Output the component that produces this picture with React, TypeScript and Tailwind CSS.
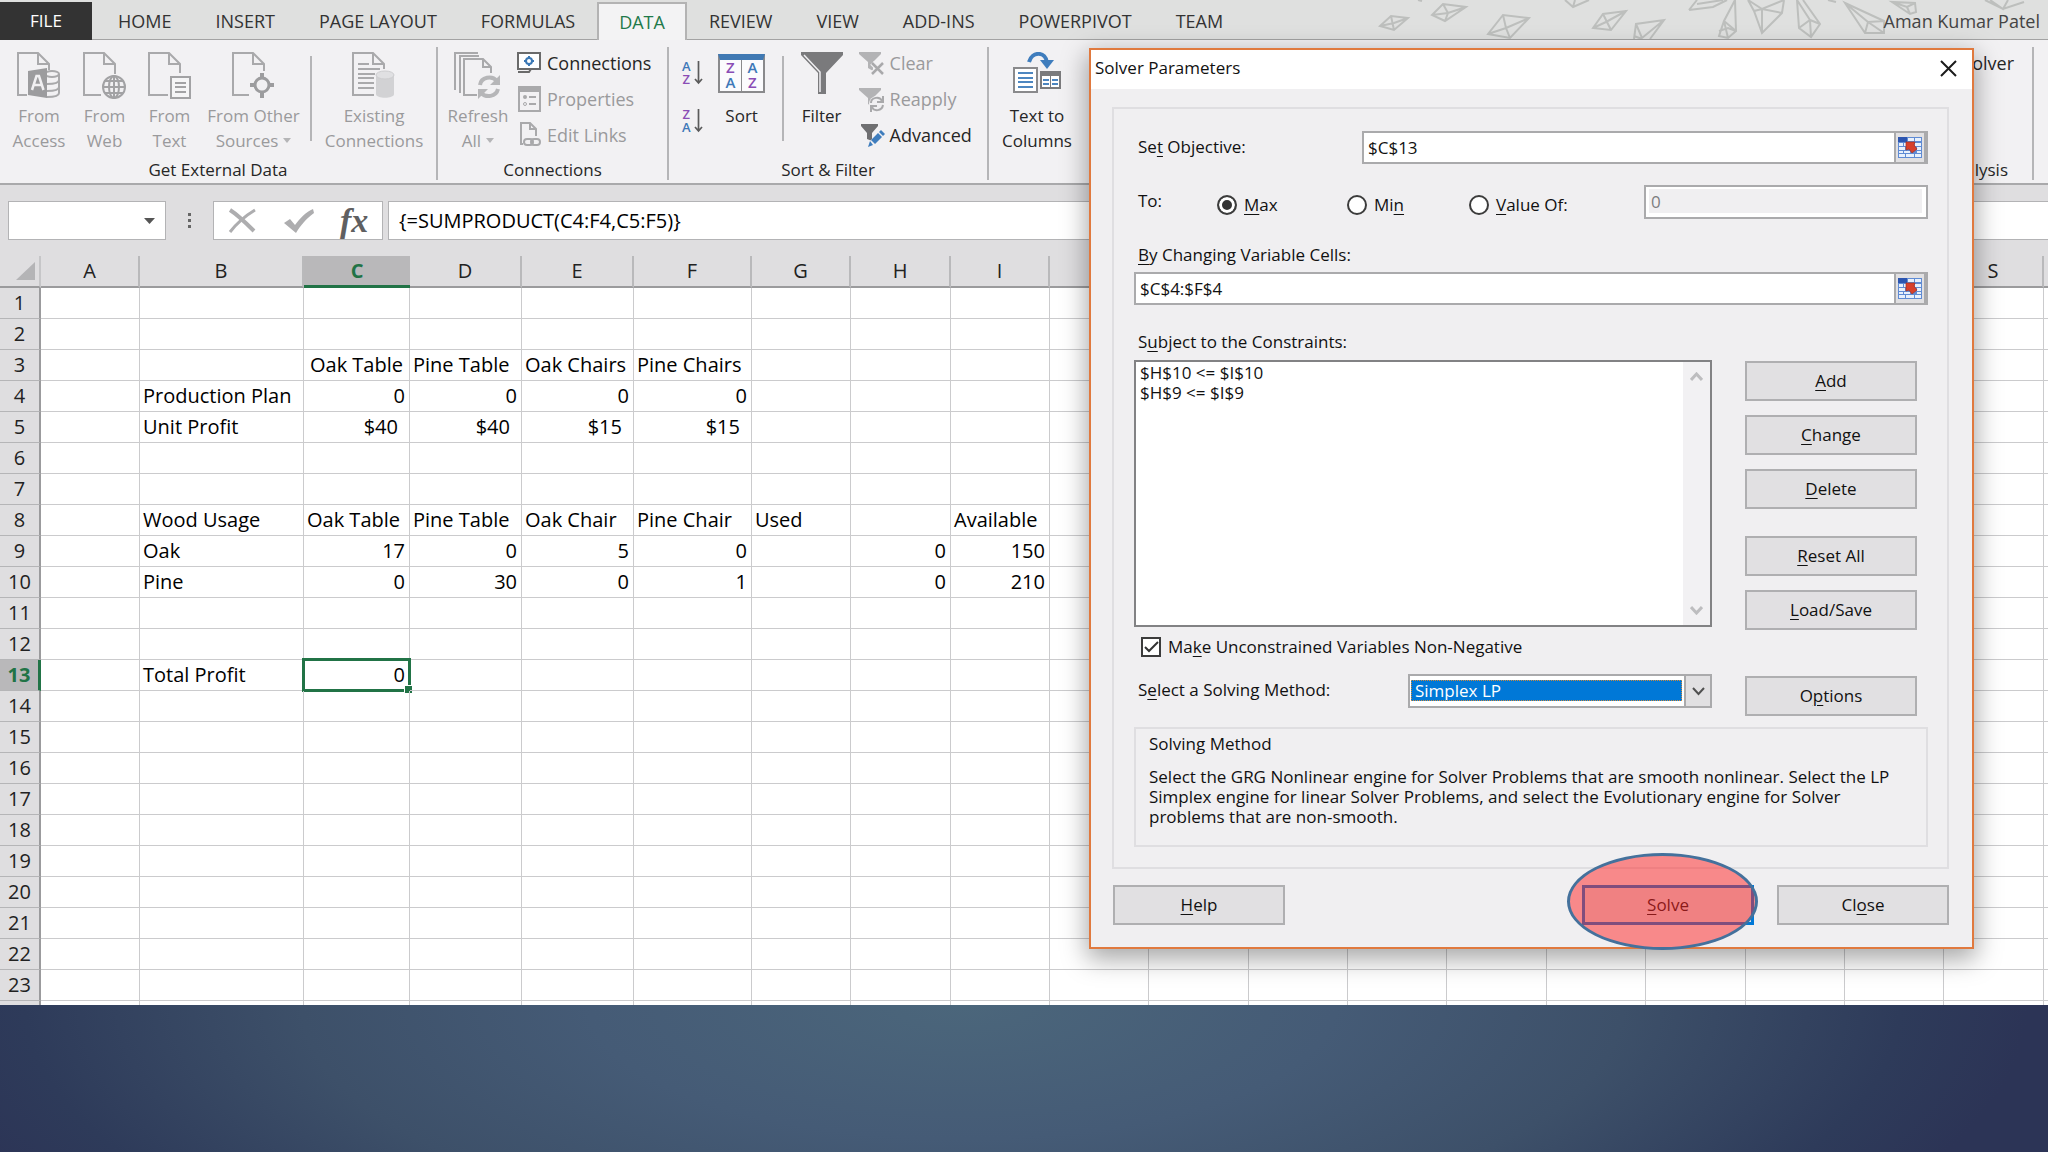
import React from "react";

const GREY = "#a9a9ab";

/* ---------- icons ---------- */

function AccessIcon() {
  return (
    <svg width="44" height="48" viewBox="0 0 44 48" aria-hidden="true">
      <path d="M10 43H1V1h20l11 11v6M21 1v11h11" fill="none" stroke={GREY} strokeWidth="2" />
      <g fill="none" stroke={GREY} strokeWidth="2">
        <ellipse cx="35" cy="22" rx="7" ry="3" />
        <path d="M42 22v19c0 2-3 4-12 4M42 28c0 3-5 4-12 4M42 35c0 3-5 4-12 4" />
      </g>
      <path d="M11 19l19-3v30l-19-3z" fill="#9c9c9e" />
      <path d="M15 38l4.500-14h2.500l4.500 14M17 33h7" fill="none" stroke="#f1f0f2" strokeWidth="2.500" />
    </svg>
  );
}

function WebIcon() {
  return (
    <svg width="44" height="48" viewBox="0 0 44 48" aria-hidden="true">
      <path d="M18 43H1V1h20l11 11v10M21 1v11h11" fill="none" stroke={GREY} strokeWidth="2" />
      <circle cx="31" cy="35" r="11" fill="#f1f0f2" stroke="#a2a2a4" strokeWidth="2" />
      <g fill="none" stroke="#a2a2a4" strokeWidth="2">
        <ellipse cx="31" cy="35" rx="5" ry="11" />
        <path d="M31 24v22M20 35h22M22 29h18M22 41h18" />
      </g>
    </svg>
  );
}

function TextIcon() {
  return (
    <svg width="44" height="48" viewBox="0 0 44 48" aria-hidden="true">
      <path d="M20 43H1V1h20l11 11v9M21 1v11h11" fill="none" stroke={GREY} strokeWidth="2" />
      <rect x="23" y="25" width="19" height="21" fill="#f5f5f6" stroke="#a2a2a4" strokeWidth="2" />
      <path d="M27 31h11M27 35h11M27 40h11" stroke="#a2a2a4" strokeWidth="2" />
    </svg>
  );
}

function SourcesIcon() {
  return (
    <svg width="44" height="48" viewBox="0 0 44 48" aria-hidden="true">
      <path d="M17 43H1V1h20l11 11v7M21 1v11h11" fill="none" stroke={GREY} strokeWidth="2" />
      <circle cx="30" cy="33" r="7" fill="#f1f0f2" stroke="#9c9c9e" strokeWidth="3" />
      <path d="M30 21v5M30 40v6M18 33h5M37 33h5" stroke="#9c9c9e" strokeWidth="4" />
    </svg>
  );
}

function ExistingIcon() {
  return (
    <svg width="44" height="48" viewBox="0 0 44 48" aria-hidden="true">
      <path d="M22 43H1V1h20l11 11v5M21 1v11h11" fill="none" stroke={GREY} strokeWidth="2" />
      <path d="M6 12h11M6 17h22M6 22h17M6 26h16M6 31h16M6 36h16" stroke={GREY} strokeWidth="2" />
      <path d="M24 23v19c0 5 18 5 18 0V23z" fill="#d2d2d4" />
      <ellipse cx="33" cy="23" rx="9" ry="4" fill="#e0e0e2" stroke="#cdcdcf" />
    </svg>
  );
}

function RefreshIcon() {
  return (
    <svg width="48" height="48" viewBox="0 0 48 48" aria-hidden="true">
      <path d="M1 38V1h23M6 41V4h19" fill="none" stroke={GREY} strokeWidth="2" />
      <path d="M23 43H10V7h19l8 8v6M29 7v8h8" fill="none" stroke={GREY} strokeWidth="2" />
      <g fill="none" stroke="#b6b6b8" strokeWidth="4">
        <path d="M26 33c1-8 12-10 17-4" />
        <path d="M44 37c-2 8-12 9-17 4" />
      </g>
      <path d="M46 23v10H36zM24 47V37h10z" fill="#b6b6b8" />
    </svg>
  );
}

function ConnectionsIcon() {
  return (
    <svg width="24" height="22" viewBox="0 0 24 22" aria-hidden="true">
      <rect x="1" y="1" width="22" height="16" fill="#fff" stroke="#6a6a6a" strokeWidth="2" />
      <path d="M1 20h11l2-3h5" fill="none" stroke="#6a6a6a" strokeWidth="2" />
      <circle cx="12" cy="9" r="3" fill="none" stroke="#3b78b5" strokeWidth="2" />
      <path d="M12 4v3M12 11v3M7 9h3M14 9h3" stroke="#3b78b5" strokeWidth="2" />
    </svg>
  );
}

function PropertiesIcon() {
  return (
    <svg width="24" height="26" viewBox="0 0 24 26" aria-hidden="true">
      <path d="M2 1h21v24H2z" fill="none" stroke={GREY} strokeWidth="2" />
      <path d="M1 0h23v6H1z" fill={GREY} />
      <circle cx="8" cy="11" r="2" fill={GREY} />
      <circle cx="8" cy="18" r="1.500" fill="none" stroke={GREY} />
      <path d="M12 11h7M12 18h7" stroke={GREY} strokeWidth="2" />
    </svg>
  );
}

function LinksIcon() {
  return (
    <svg width="24" height="26" viewBox="0 0 24 26" aria-hidden="true">
      <path d="M6 22H4V1h9l6 6v7M13 1v6h6" fill="none" stroke={GREY} strokeWidth="2" />
      <g fill="none" stroke={GREY} strokeWidth="2">
        <rect x="7" y="17" width="9" height="6" rx="3" />
        <rect x="14" y="17" width="9" height="6" rx="3" />
      </g>
    </svg>
  );
}

function LetterSort({ top, bottom }: { top: "A" | "Z"; bottom: "A" | "Z" }) {
  return (
    <button type="button" aria-label={`Sort ${top} to ${bottom}`} className="flex h-[26px] items-center gap-[3px]">
      <span className="flex flex-col text-[13px] font-semibold leading-[13px]" aria-hidden="true">
        <span className={top === "A" ? "text-[#3e78b8]" : "text-[#8a4db5]"}>{top}</span>
        <span className={bottom === "A" ? "text-[#3e78b8]" : "text-[#8a4db5]"}>{bottom}</span>
      </span>
      <svg width="9" height="24" viewBox="0 0 9 24" aria-hidden="true">
        <path d="M4.500 0v22M1 18l3.500 4 3.500-4" fill="none" stroke="#5b5b5b" strokeWidth="1.700" />
      </svg>
    </button>
  );
}

function SortIcon() {
  return (
    <span
      className="mt-[2px] grid h-[39px] w-[47px] grid-cols-2 border-2 border-t-[6px] border-[#8a8a8c] border-t-[#4079b3] bg-[#fbfbfd] text-center text-[15px] font-semibold leading-[15px]"
      aria-hidden="true"
    >
      <span className="flex flex-col border-r border-[#8a8a8c]">
        <span className="text-[#8a4db5]">Z</span>
        <span className="text-[#3e78b8]">A</span>
      </span>
      <span className="flex flex-col">
        <span className="text-[#3e78b8]">A</span>
        <span className="text-[#8a4db5]">Z</span>
      </span>
    </span>
  );
}

function FilterIcon() {
  return (
    <svg width="42" height="43" viewBox="0 0 42 43" aria-hidden="true">
      <path d="M0 0h42v3L25 21v21h-8V21L0 3z" fill="#7a7a7c" />
      <path d="M3 3l16 17v20" fill="none" stroke="#f1f0f2" strokeWidth="1.500" />
    </svg>
  );
}

function SmallFunnel({ kind }: { kind: "clear" | "reapply" | "advanced" }) {
  const dark = kind === "advanced";
  return (
    <svg width="26" height="25" viewBox="0 0 26 25" aria-hidden="true">
      <path d={dark ? "M2 1h17v2l-6 7v8l-5-2v-6L2 3z" : "M0 1h22v2l-8 8v9l-5-3v-6L0 3z"} fill={dark ? "#6f6f71" : "#b3b3b5"} />
      {kind === "clear" && <path d="M13 12l11 11M24 12L13 23" stroke="#f1f0f2" strokeWidth="5" />}
      {kind === "clear" && <path d="M13 12l11 11M24 12L13 23" stroke="#a9a9ab" strokeWidth="2.500" />}
      {kind === "reapply" && (
        <g fill="none" stroke="#a9a9ab" strokeWidth="2">
          <circle cx="18" cy="17" r="8" fill="#f1f0f2" stroke="none" />
          <path d="M12 16c0-6 9-7 11-2M24 9v6h-6M24 18c-1 6-9 7-11 2M12 25v-6h6" />
        </g>
      )}
      {dark && (
        <g>
          <path d="M9 25l2-7L22 7l4 4-11 11z" fill="#f1f0f2" />
          <path d="M9 24l2-6 3 4zM12 17l7-7 4 4-7 7zM20 9l2-2 4 4-2 2z" fill="#3f7dbd" />
        </g>
      )}
    </svg>
  );
}

function ColumnsIcon() {
  return (
    <svg width="48" height="41" viewBox="0 0 48 41" aria-hidden="true">
      <path d="M16 10C19-1 33-1 34 11" fill="none" stroke="#3f7dbd" strokeWidth="4" />
      <path d="M27 8l7 9 7-9z" fill="#3f7dbd" />
      <rect x="1" y="16" width="23" height="24" fill="#fff" stroke="#8a8a8c" strokeWidth="2" />
      <path d="M5 21h15M5 26h15M5 30h15M5 35h15" stroke="#4d86c0" strokeWidth="2" />
      <rect x="28" y="20" width="19" height="16" fill="#fff" stroke="#7b7b7d" strokeWidth="2" />
      <path d="M27 19h21v5H27z" fill="#7b7b7d" />
      <path d="M30 28h6M39 28h6M30 32h6M39 32h6" stroke="#4d86c0" strokeWidth="2" />
      <path d="M37.500 24v12" stroke="#7b7b7d" />
    </svg>
  );
}

function Backdrop() {
  return (
    <svg
      className="absolute right-0 top-0"
      width="678"
      height="40"
      viewBox="1370 0 678 40"
      fill="none"
      stroke="#bdbfbd"
      strokeWidth="2"
      aria-hidden="true"
    >
      <path d="M1380 26l11-10 17 2-14 12zM1380 26l14-3 14-5M1391 16l3 14" />
      <path d="M1432 15l11-11 23 3-21 14zM1432 15l16-2 18-6M1443 4l5 9-3 8M1418 0l4 1" />
      <path d="M1488 34l15-19 26 3-19 20zM1488 34l18-6 23-10M1503 15l3 13 4 10" />
      <path d="M1565 0l8 7 16-7M1573 7l2-7" />
      <path d="M1593 28l10-14 23-3-15 19zM1593 28l13-6 20-11M1603 14l8 16" />
      <path d="M1634 39l2-15 28-4-14 19M1636 24l6 14 22-18M1634 36l8 3" />
      <path d="M1689 10l8-10M1689 10l24-3 14-7M1697 4l26-4" />
      <path d="M1719 36l5-15 11-21 1 31-8 7zM1724 21l4 17M1724 21l12 10M1719 31l9-3 8 3" />
      <path d="M1748 0l6 11 8 22 20-20 2-13M1748 0l14 9 22-9M1762 9v24M1754 11l8-2 20 4" />
      <path d="M1797 0l2 28 12 9 9-13-17-24M1799 28l11-8 10 4M1810 20l1 17M1797 0l13 20" />
      <path d="M1828 0l8 2" />
      <path d="M1845 3l20 30h19V21zM1845 3l23 19 16-1M1868 22l-3 11M1868 22l16 11" />
      <path d="M1892 2l18 12 6-2-1-9zM1892 2l15 5 8-4M1907 7l3 7" />
      <path d="M1985 0l18 9 21-7M1990 0l13 9 5-9" />
    </svg>
  );
}

/* ---------- ribbon ---------- */

function BigButton({
  icon,
  lines,
  arrow,
  muted,
  className,
}: {
  icon: React.ReactNode;
  lines: string[];
  arrow?: boolean;
  muted?: boolean;
  className: string;
}) {
  return (
    <button type="button" className={`flex shrink-0 flex-col items-center ${className} ${muted ? "text-[#9a9a9c]" : "text-[#262626]"}`}>
      <span className="flex h-[51px] items-start justify-center">{icon}</span>
      {lines.map((l, i) => (
        <span key={l} className="flex items-center gap-[5px] whitespace-nowrap leading-[25px]">
          {l}
          {arrow && i === lines.length - 1 && (
            <svg width="8" height="5" viewBox="0 0 8 5" aria-hidden="true">
              <path d="M0 0h8L4 5z" fill="#b5b5b7" />
            </svg>
          )}
        </span>
      ))}
    </button>
  );
}

function SmallButton({ icon, label, muted }: { icon: React.ReactNode; label: string; muted?: boolean }) {
  return (
    <button type="button" className={`flex h-9 items-center gap-[5px] text-[18px] ${muted ? "text-[#9a9a9c]" : "text-[#262626]"}`}>
      <span className="flex w-[26px] justify-center">{icon}</span>
      {label}
    </button>
  );
}

function Group({ label, className, children }: { label: string; className: string; children: React.ReactNode }) {
  return (
    <section aria-label={label} className={`flex shrink-0 flex-col border-r-2 border-[#b5b5b7] ${className}`}>
      <div className="flex h-[113px] items-start pt-[5px]">{children}</div>
      <div className="text-center leading-[20px] text-[#262626]">{label}</div>
    </section>
  );
}

const TABS = ["HOME", "INSERT", "PAGE LAYOUT", "FORMULAS", "DATA", "REVIEW", "VIEW", "ADD-INS", "POWERPIVOT", "TEAM"];

function Tabs() {
  return (
    <nav className="relative flex h-10 items-stretch bg-[#dfe0df] pt-[2px] text-[18px]">
      <Backdrop />
      <div className="absolute inset-x-0 bottom-0 h-px bg-[#a3a3a3]" />
      <button type="button" className="relative w-[92px] bg-[#333333] text-[17px] text-white">
        FILE
      </button>
      <div className="relative ml-[4px] flex">
        {TABS.map((t) => (
          <button
            key={t}
            type="button"
            className={
              t === "DATA"
                ? "border-2 border-b-0 border-[#b3b3b3] bg-[#f3f3f4] px-[20px] text-[#1f7a4a]"
                : "whitespace-nowrap px-[22px] text-[#333333]"
            }
          >
            {t}
          </button>
        ))}
      </div>
      <div className="relative ml-auto flex items-center pr-[8px] text-[#444444]">Aman Kumar Patel</div>
    </nav>
  );
}

function Ribbon() {
  return (
    <div className="flex h-[145px] items-start overflow-hidden border-b-2 border-[#a9a9ab] bg-[#f2f1f3] pt-[7px] text-[17px]">
      <Group label="Get External Data" className="w-[438px]">
        <BigButton muted icon={<AccessIcon />} lines={["From", "Access"]} className="ml-[6px] w-[66px]" />
        <BigButton muted icon={<WebIcon />} lines={["From", "Web"]} className="w-[65px]" />
        <BigButton muted icon={<TextIcon />} lines={["From", "Text"]} className="w-[65px]" />
        <BigButton muted arrow icon={<SourcesIcon />} lines={["From Other", "Sources"]} className="w-[103px]" />
        <div className="ml-[5px] mt-[4px] h-[85px] w-[2px] bg-[#b5b5b7]" />
        <BigButton muted icon={<ExistingIcon />} lines={["Existing", "Connections"]} className="ml-[7px] w-[110px]" />
      </Group>
      <Group label="Connections" className="w-[231px]">
        <BigButton muted arrow icon={<RefreshIcon />} lines={["Refresh", "All"]} className="ml-[8px] w-[64px]" />
        <div className="-mt-[7px] ml-[6px] flex flex-col">
          <SmallButton icon={<ConnectionsIcon />} label="Connections" />
          <SmallButton muted icon={<PropertiesIcon />} label="Properties" />
          <SmallButton muted icon={<LinksIcon />} label="Edit Links" />
        </div>
      </Group>
      <Group label="Sort & Filter" className="w-[320px]">
        <div className="ml-[13px] mt-[8px] flex flex-col gap-[22px]">
          <LetterSort top="A" bottom="Z" />
          <LetterSort top="Z" bottom="A" />
        </div>
        <BigButton icon={<SortIcon />} lines={["Sort"]} className="ml-[12px] w-[54px]" />
        <div className="ml-[13px] mt-[4px] h-[85px] w-[2px] bg-[#b5b5b7]" />
        <BigButton icon={<FilterIcon />} lines={["Filter"]} className="ml-[14px] w-[48px]" />
        <div className="-mt-[7px] ml-[13px] flex flex-col">
          <SmallButton muted icon={<SmallFunnel kind="clear" />} label="Clear" />
          <SmallButton muted icon={<SmallFunnel kind="reapply" />} label="Reapply" />
          <SmallButton icon={<SmallFunnel kind="advanced" />} label="Advanced" />
        </div>
      </Group>
      <div className="pt-[5px]">
        <BigButton icon={<ColumnsIcon />} lines={["Text to", "Columns"]} className="ml-[8px] w-[80px]" />
      </div>
      <section aria-label="Analysis" className="ml-auto mr-[14px] flex w-[110px] flex-col border-r-2 border-[#b5b5b7] pr-[18px] text-right text-[#262626]">
        <div className="flex h-[113px] items-start justify-end">
          <button type="button" className="-mt-[2px] h-9 text-[18px]">
            Solver
          </button>
        </div>
        <div className="pr-[6px] leading-[20px]">Analysis</div>
      </section>
    </div>
  );
}

function FormulaBar() {
  return (
    <div className="flex h-[71px] items-start bg-[#dfdee0] pl-[8px] pt-[16px]">
      <div className="flex h-[39px] w-[158px] items-center border border-[#b3b3b5] bg-white pr-[10px]">
        <input aria-label="Name box" className="min-w-0 flex-1 bg-transparent outline-none" />
        <svg width="11" height="6" viewBox="0 0 11 6" aria-hidden="true">
          <path d="M0 0h11L5.500 6z" fill="#555" />
        </svg>
      </div>
      <svg className="mx-[21px] mt-[11px]" width="5" height="18" viewBox="0 0 5 18" fill="#666" aria-hidden="true">
        <path d="M1 1h3v3H1zM1 7h3v3H1zM1 13h3v3H1z" />
      </svg>
      <div className="flex h-[39px] w-[170px] items-center border border-[#b3b3b5] bg-white pl-[14px]">
        <button type="button" aria-label="Cancel">
          <svg width="28" height="26" viewBox="0 0 28 26" fill="none" stroke="#adadaf" aria-hidden="true">
            <path d="M2 2c8 5 15 12 24 21" strokeWidth="4" />
            <path d="M27 2C17 8 9 15 2 24" strokeWidth="3" />
          </svg>
        </button>
        <button type="button" aria-label="Enter" className="ml-[28px]">
          <svg width="30" height="26" viewBox="0 0 30 26" aria-hidden="true">
            <path d="M0 15l6-4 5 6C16 10 22 4 29 1l1 4C22 11 17 17 12 25z" fill="#adadaf" />
          </svg>
        </button>
        <button
          type="button"
          aria-label="Insert function"
          className="ml-[26px] font-['Liberation_Serif',serif] text-[34px] font-bold italic leading-[30px] text-[#5f5f61]"
        >
          fx
        </button>
      </div>
      <input
        aria-label="Formula"
        defaultValue="{=SUMPRODUCT(C4:F4,C5:F5)}"
        className="ml-[5px] h-[39px] min-w-0 flex-1 border border-r-0 border-[#b3b3b5] bg-white pl-[10px] text-[20px] text-black outline-none"
      />
    </div>
  );
}

/* ---------- sheet ---------- */

const COLS: [string, number][] = [
  ["A", 99],
  ["B", 164],
  ["C", 106],
  ["D", 112],
  ["E", 112],
  ["F", 118],
  ["G", 99],
  ["H", 100],
  ["I", 99],
  ["J", 99],
  ["K", 100],
  ["L", 99],
  ["M", 99],
  ["N", 100],
  ["O", 99],
  ["P", 100],
  ["Q", 99],
  ["R", 99],
  ["S", 100],
];

const CELLS: Record<string, string> = {
  C3: "Oak Table",
  D3: "Pine Table",
  E3: "Oak Chairs",
  F3: "Pine Chairs",
  B4: "Production Plan",
  C4: "0",
  D4: "0",
  E4: "0",
  F4: "0",
  B5: "Unit Profit",
  C5: "$40",
  D5: "$40",
  E5: "$15",
  F5: "$15",
  B8: "Wood Usage",
  C8: "Oak Table",
  D8: "Pine Table",
  E8: "Oak Chair",
  F8: "Pine Chair",
  G8: "Used",
  I8: "Available",
  B9: "Oak",
  C9: "17",
  D9: "0",
  E9: "5",
  F9: "0",
  H9: "0",
  I9: "150",
  B10: "Pine",
  C10: "0",
  D10: "30",
  E10: "0",
  F10: "1",
  H10: "0",
  I10: "210",
  B13: "Total Profit",
  C13: "0",
};

function alignment(id: string, text: string) {
  if (id === "C3") return "text-center";
  if (text.startsWith("$")) return "pr-[11px] text-right";
  if (/^\d+$/.test(text)) return "pr-[4px] text-right";
  return "pl-[3px] text-left";
}

function Sheet() {
  const rows = Array.from({ length: 24 }, (_, i) => i + 1);
  return (
    <div className="h-[749px] overflow-hidden bg-white">
      <table className="w-full table-fixed border-separate border-spacing-0 text-[20px] leading-[26px] text-black">
        <colgroup>
          <col className="w-[41px]" />
          {COLS.map(([c, w]) => (
            <col key={c} style={{ width: w }} />
          ))}
          <col />
        </colgroup>
        <thead>
          <tr className="h-[32px]">
            <td className="border-b-2 border-r-2 border-b-[#9b9b9d] border-r-[#c6c6c8] bg-[#dfdee0] p-0">
              <svg className="ml-auto mr-[4px]" width="19" height="18" viewBox="0 0 19 18" aria-hidden="true">
                <path d="M19 0v18H0z" fill="#b4b4b6" />
              </svg>
            </td>
            {COLS.map(([c]) => (
              <th
                key={c}
                scope="col"
                className={
                  c === "C"
                    ? "border-b-[3px] border-[#217346] bg-[#b9b8ba] p-0 font-bold text-[#217346]"
                    : "border-b-2 border-r-2 border-b-[#9b9b9d] border-r-[#b9b9bb] bg-[#dfdee0] p-0 font-normal text-[#222222]"
                }
              >
                {c}
              </th>
            ))}
            <td className="border-b-2 border-b-[#9b9b9d] bg-[#dfdee0] p-0" />
          </tr>
        </thead>
        <tbody>
          {rows.map((r) => (
            <tr key={r} className="h-[31px]">
              <th
                scope="row"
                className={
                  r === 13
                    ? "border-b border-r-[3px] border-b-[#b5b5b7] border-r-[#217346] bg-[#b9b8ba] p-0 font-bold text-[#217346]"
                    : "border-b border-r-2 border-b-[#b5b5b7] border-r-[#9b9b9d] bg-[#dfdee0] p-0 font-normal text-[#222222]"
                }
              >
                {r < 24 ? r : null}
              </th>
              {COLS.map(([c]) => {
                const id = `${c}${r}`;
                const text = CELLS[id] ?? "";
                return (
                  <td key={c} className={`relative whitespace-nowrap border-b border-r border-[#cbcbcd] py-0 ${text ? alignment(id, text) : "p-0"}`}>
                    {text}
                    {id === "C13" && (
                      <span className="absolute -bottom-[2px] -left-[2px] -right-[2px] -top-[2px] border-[3px] border-[#217346]">
                        <span className="absolute -bottom-[5px] -right-[5px] size-[9px] border border-white bg-[#217346]" />
                      </span>
                    )}
                  </td>
                );
              })}
              <td className="border-b border-[#cbcbcd] p-0" />
            </tr>
          ))}
        </tbody>
      </table>
    </div>
  );
}

/* ---------- solver dialog ---------- */

/* Renders a caption with its access key underlined. */
function Key({ text, at }: { text: string; at: number }) {
  return (
    <span>
      {text.slice(0, at)}
      <u className="underline-offset-[3px]">{text[at]}</u>
      {text.slice(at + 1)}
    </span>
  );
}

function DialogButton({ text, at, className = "" }: { text: string; at: number; className?: string }) {
  return (
    <button type="button" className={`h-10 w-[172px] border-2 border-[#afafb1] bg-[#e1e0e2] ${className}`}>
      <Key text={text} at={at} />
    </button>
  );
}

function RefInput({ id, value }: { id: string; value: string }) {
  return (
    <div className="flex h-[33px] flex-1 border-2 border-[#aaaaac] bg-white">
      <input id={id} defaultValue={value} className="min-w-0 flex-1 bg-transparent pl-[4px] outline-none" />
      <button
        type="button"
        aria-label="Select range"
        className="-my-[2px] -mr-[2px] flex w-[34px] items-center justify-center border-2 border-r-[4px] border-[#aaaaac] bg-[#e1e0e2]"
      >
        <svg width="24" height="21" viewBox="0 0 24 21" aria-hidden="true">
          <rect width="24" height="21" fill="#5f8bd4" />
          <path
            d="M10 1h6v3h-6zM17 1h6v3h-6zM1 6h4v3H1zM6 6h7v3H6zM17 6h6v3h-6zM1 10h6v3H1zM19 10h4v3h-4zM1 14h4v2H1zM6 14h6v2H6zM19 14h4v2h-4zM1 17h6v3H1zM8 17h8v3H8zM17 17h6v3h-6z"
            fill="#e8f0fc"
          />
          <path d="M0 0h9v5H0z" fill="#2c55b0" />
          <path d="M8 5l9 0-1 3 3 4-5 4-3-4-3 1z" fill="#d8402c" stroke="#a83020" strokeWidth="0.700" />
        </svg>
      </button>
    </div>
  );
}

function Radio({ text, at, checked, className }: { text: string; at: number; checked?: boolean; className: string }) {
  return (
    <label className={`flex shrink-0 items-center gap-[7px] pt-[5px] ${className}`}>
      <input
        type="radio"
        name="goal"
        defaultChecked={checked}
        className="size-[20px] appearance-none rounded-full border-2 border-[#3c3c3c] bg-white checked:bg-[#333333] checked:shadow-[inset_0_0_0_3px_#ffffff]"
      />
      <Key text={text} at={at} />
    </label>
  );
}

function Chevron({ up, dark }: { up?: boolean; dark?: boolean }) {
  return (
    <svg width="13" height="9" viewBox="0 0 13 9" fill="none" stroke={dark ? "#505050" : "#bdbdbf"} strokeWidth={dark ? 2 : 3} aria-hidden="true">
      <path d={up ? "M1 8l5.500-6L12 8" : "M1 1l5.500 6L12 1"} />
    </svg>
  );
}

function SolverDialog() {
  return (
    <div
      role="dialog"
      aria-labelledby="solver-title"
      className="absolute right-[74px] top-[48px] w-[885px] border-2 border-[#e0793e] bg-[#f0eff1] text-[17px] leading-[20px] text-[#111111] shadow-[0_8px_24px_2px_rgba(0,0,0,0.35)]"
    >
      <header className="flex h-[39px] items-center justify-between bg-white pb-[3px] pl-[4px] pr-[15px]">
        <h2 id="solver-title">Solver Parameters</h2>
        <button type="button" aria-label="Close window">
          <svg width="17" height="17" viewBox="0 0 17 17" fill="none" stroke="#1c1c1c" strokeWidth="2" aria-hidden="true">
            <path d="M1 1l15 15M16 1L1 16" />
          </svg>
        </button>
      </header>

      <div className="mb-[16px] ml-[21px] mr-[23px] mt-[18px] border-2 border-[#dfdee1] pb-[20px] pl-[20px] pr-[19px] pt-[22px]">
        <div className="flex items-center">
          <label htmlFor="objective" className="w-[228px] pb-[2px] pl-[4px]">
            <Key text="Set Objective:" at={2} />
          </label>
          <RefInput id="objective" value="$C$13" />
        </div>

        <div role="radiogroup" aria-labelledby="goal-label" className="mt-[21px] flex h-[34px] items-center">
          <span id="goal-label" className="w-[83px] pb-[2px] pl-[4px]">
            To:
          </span>
          <Radio text="Max" at={0} checked className="w-[130px]" />
          <Radio text="Min" at={2} className="w-[122px]" />
          <Radio text="Value Of:" at={0} className="w-[175px]" />
          <div className="h-[34px] flex-1 border-2 border-[#aaaaac] bg-white py-[2px] pl-[3px] pr-[4px]">
            <input aria-label="Value" disabled defaultValue="0" className="block h-[24px] w-full bg-[#f0eff1] pl-[2px] text-[#7d7d7f]" />
          </div>
        </div>

        <label htmlFor="cells" className="mt-[26px] block pl-[4px]">
          <Key text="By Changing Variable Cells:" at={0} />
        </label>
        <div className="mt-[7px] flex">
          <RefInput id="cells" value="$C$4:$F$4" />
        </div>

        <div id="constraints-label" className="mt-[27px] pl-[4px]">
          <Key text="Subject to the Constraints:" at={1} />
        </div>

        <div className="mt-[8px] flex gap-[33px] pr-[11px]">
          <div className="flex flex-1 flex-col">
            <div className="flex h-[267px] border-2 border-[#828284] bg-white">
              <ul aria-labelledby="constraints-label" className="flex-1 pl-[4px] pt-px">
                <li>$H$10 &lt;= $I$10</li>
                <li>$H$9 &lt;= $I$9</li>
              </ul>
              <div className="flex w-[27px] flex-col items-center justify-between bg-[#f2f1f3] py-[10px]">
                <Chevron up />
                <Chevron />
              </div>
            </div>
            <label className="mt-[10px] flex h-[20px] items-center gap-[7px] pl-[7px]">
              <span className="relative flex size-[20px]">
                <input type="checkbox" defaultChecked className="size-[20px] appearance-none border-2 border-[#3c3c3c] bg-white" />
                <svg className="pointer-events-none absolute left-[3px] top-[4px]" width="15" height="12" viewBox="0 0 15 12" fill="none" stroke="#333" strokeWidth="2" aria-hidden="true">
                  <path d="M1 6l4 4 9-9" />
                </svg>
              </span>
              <Key text="Make Unconstrained Variables Non-Negative" at={2} />
            </label>
            <div className="mt-[17px] flex h-[34px] items-center">
              <label htmlFor="method" className="w-[274px] pb-[2px] pl-[4px]">
                <Key text="Select a Solving Method:" at={1} />
              </label>
              <div className="relative flex h-[34px] flex-1 border-2 border-[#aaaaac] bg-white">
                <select
                  id="method"
                  defaultValue="Simplex LP"
                  className="my-[4px] ml-[1px] mr-[2px] h-[21px] flex-1 appearance-none border border-dotted border-[#d08a3c] bg-[#0078d7] pl-[3px] leading-[19px] text-white outline-none"
                >
                  <option>GRG Nonlinear</option>
                  <option>Simplex LP</option>
                  <option>Evolutionary</option>
                </select>
                <span className="pointer-events-none -my-[2px] -mr-[2px] flex w-[28px] items-center justify-center border-2 border-[#aaaaac] bg-[#e1e0e2]">
                  <Chevron dark />
                </span>
              </div>
            </div>
          </div>
          <div className="flex flex-col gap-[14px] pt-px">
            <DialogButton text="Add" at={0} />
            <DialogButton text="Change" at={0} />
            <DialogButton text="Delete" at={0} />
            <DialogButton text="Reset All" at={0} className="mt-[13px]" />
            <DialogButton text="Load/Save" at={0} />
            <DialogButton text="Options" at={1} className="mt-[32px]" />
          </div>
        </div>

        <section className="mt-[11px] border-2 border-[#dfdee1] px-[13px] pb-[18px] pt-[5px]">
          <h3>Solving Method</h3>
          <p className="mt-[13px] w-[760px]">
            Select the GRG Nonlinear engine for Solver Problems that are smooth nonlinear. Select the LP Simplex engine for linear Solver
            Problems, and select the Evolutionary engine for Solver problems that are non-smooth.
          </p>
        </section>
      </div>

      <footer className="flex pb-[22px] pl-[22px] pr-[23px]">
        <DialogButton text="Help" at={0} />
        <div className="relative ml-auto">
          <button type="button" className="h-10 w-[172px] border-[3px] border-[#0078d7] bg-[#e1e0e2]">
            <Key text="Solve" at={0} />
          </button>
          <span className="pointer-events-none absolute -left-[15px] -top-[32px] h-[97px] w-[191px] rounded-[50%] border-[3px] border-[#44719c] bg-[#ff2222]/50" />
        </div>
        <DialogButton text="Close" at={2} className="ml-[23px]" />
      </footer>
    </div>
  );
}

export default function App() {
  return (
    <div className="relative flex min-h-screen flex-col overflow-hidden bg-[#2c3556] font-['Open_Sans','Noto_Sans',sans-serif]">
      <Tabs />
      <Ribbon />
      <FormulaBar />
      <Sheet />
      <div className="flex-1 bg-[radial-gradient(ellipse_52%_260%_at_47%_0%,#4b667b_0%,#455b76_35%,#3d5069_62%,#2e3b5a_88%,#2c3456_100%)]" />
      <SolverDialog />
    </div>
  );
}
